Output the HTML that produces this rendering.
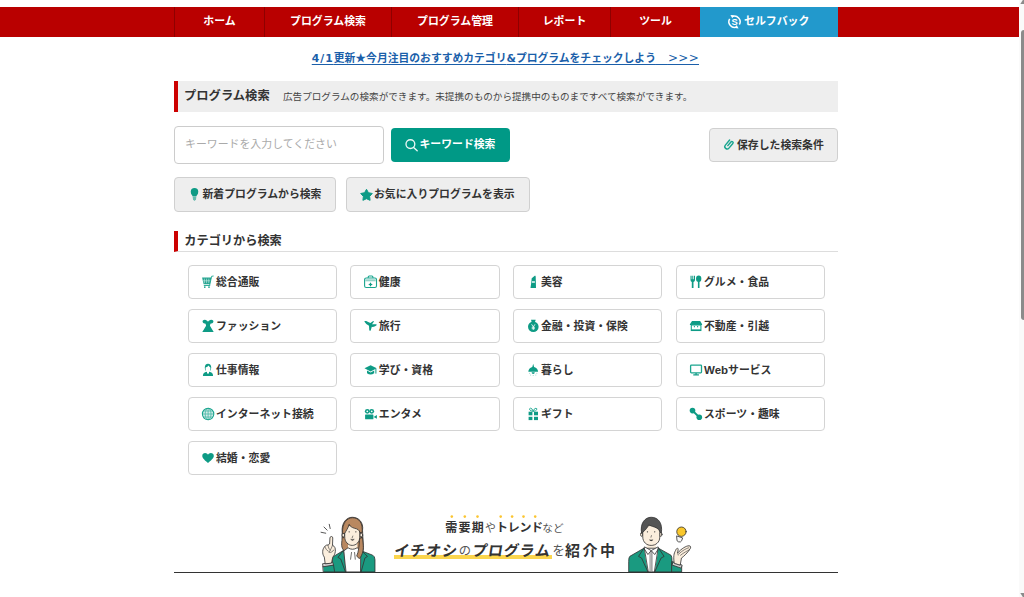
<!DOCTYPE html>
<html lang="ja">
<head>
<meta charset="utf-8">
<title>プログラム検索</title>
<style>
*{box-sizing:border-box;margin:0;padding:0}
html,body{width:1024px;height:597px;overflow:hidden;background:#fff}
body{font-family:"Liberation Sans","Noto Sans CJK JP",sans-serif;color:#333;position:relative}
.lat{font-family:"DejaVu Sans","Liberation Sans",sans-serif}
#nav{position:absolute;left:0;top:7px;width:1018.5px;height:30px;background:#b90000}
#nav div{position:absolute;top:0;height:30px;line-height:29px;text-align:center;color:#fff;font-weight:bold;font-size:10.9px;border-left:1px solid #8e0000;white-space:nowrap}
#nav div.sb{background:#2299cc;border-left:none;font-size:10.9px;text-align:left;padding-left:44px}
#notice{position:absolute;left:173.4px;width:664px;top:49px;height:18px;line-height:19px;text-align:center;font-size:10.8px;font-weight:bold;white-space:nowrap}
#notice a{color:#1b5faa;text-decoration:underline;text-underline-offset:2px}
#h1{position:absolute;left:174px;top:81px;width:664px;height:31px;background:#eee;border-left:4px solid #cc0000;white-space:nowrap}
#h1 b{position:absolute;left:6px;top:0;line-height:31px;font-size:12.3px;color:#333}
#h1 span{position:absolute;left:105px;top:0;line-height:32px;font-size:9.6px;color:#444}
.btn{position:absolute;border:1px solid #d0d0d0;background:#eee;border-radius:4px;font-weight:bold;font-size:10.85px;color:#333;white-space:nowrap}
.btn span{position:absolute;top:0}
#kw{position:absolute;left:174px;top:126px;width:210px;height:38px;border:1px solid #ccc;border-radius:4px;background:#fff;font-size:10.9px;color:#aaa;line-height:35px;padding-left:10px;white-space:nowrap}
#kwbtn{position:absolute;left:391px;top:128px;width:118.5px;height:34px;border-radius:4px;background:#009986;color:#fff;font-weight:bold;font-size:10.85px;line-height:33px;white-space:nowrap}
#kwbtn span{position:absolute;left:28.5px;top:0}
#h2{position:absolute;left:174px;top:231px;width:664px;height:21px;border-left:4px solid #cc0000;border-bottom:1px solid #ddd;line-height:20px;font-size:12.2px;font-weight:bold;padding-left:6.3px;color:#333;white-space:nowrap}
.cat{position:absolute;width:148.5px;height:33.5px;border:1px solid #d4d4d4;border-radius:4px;background:#fff;font-size:10.85px;font-weight:bold;line-height:32px;color:#333;white-space:nowrap}
.cat span{position:absolute;left:27px;top:0}
#banner div{position:absolute;white-space:nowrap;color:#333}
#banner .t1{top:517px;height:22px;line-height:22px;font-size:12px}
#banner .t2{top:538px;height:26px;line-height:26px;font-size:15px}
#banner .ul{left:393.5px;top:555px;width:158.5px;height:4.3px;background:#fbd54d}
#banner .bl{left:174px;top:572px;width:664px;height:1.3px;background:#333}
#icons{position:absolute;left:0;top:0;width:1024px;height:597px;pointer-events:none}
#sbar{position:absolute;left:1018.5px;top:0;width:5.5px;height:597px;background:#fafafa}
#sbar i{position:absolute;left:2px;top:30px;width:8px;height:290px;border-radius:3px;background:#8b8b8b}
</style>
</head>
<body>
<div id="nav">
<div style="left:174px;width:90px">ホーム</div><div style="left:264px;width:127px">プログラム検索</div><div style="left:391px;width:127px">プログラム管理</div><div style="left:518px;width:92px">レポート</div><div style="left:610px;width:90px">ツール</div><div class="sb" style="left:700px;width:138px">セルフバック</div>
</div>
<div id="notice"><a><span class="lat" style="letter-spacing:1px">4/1</span>更新★今月注目のおすすめカテゴリ<span class="lat">&amp;</span>プログラムをチェックしよう<span style="letter-spacing:1.2px">　</span><span class="lat" style="letter-spacing:.3px;font-weight:normal;font-size:12px;line-height:1">&gt;&gt;&gt;</span></a></div>
<div id="h1"><b>プログラム検索</b><span>広告プログラムの検索ができます。未提携のものから提携中のものまですべて検索ができます。</span></div>
<div id="kw">キーワードを入力してください</div>
<div id="kwbtn"><span>キーワード検索</span></div>
<div class="btn" style="left:709px;top:128px;width:129px;height:34px;line-height:32px"><span style="left:27px">保存した検索条件</span></div>
<div class="btn" style="left:174px;top:177px;width:162px;height:34.5px;line-height:32px"><span style="left:27.5px">新着プログラムから検索</span></div>
<div class="btn" style="left:346px;top:177px;width:184px;height:34.5px;line-height:32px"><span style="left:27px">お気に入りプログラムを表示</span></div>
<div id="h2">カテゴリから検索</div>
<div id="cats">
<div class="cat" style="left:188px;width:149px;top:265px"><span>総合通販</span></div>
<div class="cat" style="left:350px;width:150px;top:265px"><span style="left:27.8px">健康</span></div>
<div class="cat" style="left:513px;width:149px;top:265px"><span>美容</span></div>
<div class="cat" style="left:676px;width:148.5px;top:265px"><span>グルメ・食品</span></div>
<div class="cat" style="left:188px;width:149px;top:309px"><span>ファッション</span></div>
<div class="cat" style="left:350px;width:150px;top:309px"><span style="left:27.8px">旅行</span></div>
<div class="cat" style="left:513px;width:149px;top:309px"><span>金融・投資・保険</span></div>
<div class="cat" style="left:676px;width:148.5px;top:309px"><span>不動産・引越</span></div>
<div class="cat" style="left:188px;width:149px;top:353px"><span>仕事情報</span></div>
<div class="cat" style="left:350px;width:150px;top:353px"><span style="left:27.8px">学び・資格</span></div>
<div class="cat" style="left:513px;width:149px;top:353px"><span>暮らし</span></div>
<div class="cat" style="left:676px;width:148.5px;top:353px"><span><span style="position:static;font-size:11.5px">Web</span>サービス</span></div>
<div class="cat" style="left:188px;width:149px;top:397px"><span>インターネット接続</span></div>
<div class="cat" style="left:350px;width:150px;top:397px"><span style="left:27.8px">エンタメ</span></div>
<div class="cat" style="left:513px;width:149px;top:397px"><span>ギフト</span></div>
<div class="cat" style="left:676px;width:148.5px;top:397px"><span>スポーツ・趣味</span></div>
<div class="cat" style="left:188px;width:149px;top:441px"><span>結婚・恋愛</span></div>
</div>
<div id="banner">
<div class="ul"></div>
<div class="t1" style="left:445.2px;letter-spacing:1.3px;font-weight:bold">需要期</div>
<div class="t1" style="left:485px;font-size:10.8px;color:#555">や</div>
<div class="t1" style="left:496px;letter-spacing:-0.3px;font-weight:bold">トレンド</div>
<div class="t1" style="left:542.3px;font-size:10.6px;color:#555">など</div>
<div class="t2" style="left:392.6px;letter-spacing:.9px;font-weight:bold;transform:skewX(-9deg);transform-origin:0 80%">イチオシ</div>
<div class="t2" style="left:458.8px;font-size:12.3px;color:#555">の</div>
<div class="t2" style="left:470.6px;letter-spacing:.8px;font-weight:bold;transform:skewX(-9deg);transform-origin:0 80%">プログラム</div>
<div class="t2" style="left:552.5px;font-size:12.3px;color:#555">を</div>
<div class="t2" style="left:565px;letter-spacing:2.5px;font-weight:bold">紹介中</div>
<div class="bl"></div>
</div>
<svg id="people" style="position:absolute;left:0;top:0;width:1024px;height:597px" viewBox="0 0 1024 597">
<g fill="#fbc531"><circle cx="451.8" cy="516.6" r="1.3"/><circle cx="464.8" cy="516.6" r="1.3"/><circle cx="477.5" cy="516.6" r="1.3"/><circle cx="500.7" cy="516.6" r="1.3"/><circle cx="512.1" cy="516.6" r="1.3"/><circle cx="523.5" cy="516.6" r="1.3"/><circle cx="535.2" cy="516.6" r="1.3"/></g>
<!-- woman -->
<g transform="translate(314 510) scale(0.11725)" stroke="#333" stroke-width="7" stroke-linejoin="round" stroke-linecap="round">
<path d="M240 190C232 105 280 62 326 62C382 62 424 105 414 175L420 300C425 360 402 398 386 415L360 352L262 346C236 338 232 300 238 262Z" fill="#b98860"/>
<path d="M290 285V345H370V285Z" fill="#fbeedd" stroke="none"/>
<path d="M255 348L290 322Q328 348 368 322L402 348V528H268Z" fill="#fff"/>
<path d="M320 362L312 420M346 362L352 420" fill="none" stroke-width="6"/>
<path d="M250 346L160 400L148 528H270Z" fill="#1a9a80"/>
<path d="M402 348L500 385Q520 395 520 425V528H400Z" fill="#1a9a80"/>
<path d="M250 346L204 404L228 418L268 528" fill="none"/><path d="M408 350L456 396L434 410L402 528" fill="none"/>
<ellipse cx="251" cy="214" rx="12" ry="17" fill="#fbeedd"/><ellipse cx="403" cy="214" rx="12" ry="17" fill="#fbeedd"/>
<rect x="243" y="227" width="10" height="14" fill="#333" stroke="none"/><rect x="402" y="227" width="10" height="14" fill="#333" stroke="none"/>
<path d="M262 160C262 120 390 120 390 160V232C390 272 360 302 326 302C292 302 262 272 262 232Z" fill="#fbeedd"/>
<path d="M244 198C236 110 285 66 328 66C384 66 420 112 410 194L392 192C388 172 372 161 346 156C322 150 305 136 300 122C292 152 274 178 262 198Z" fill="#b98860"/>
<path d="M394 240L414 236L420 300C425 360 402 398 386 415L364 392C380 360 386 300 388 262Z" fill="#b98860"/>
<circle cx="300" cy="186" r="5.500" fill="#333" stroke="none"/><circle cx="357" cy="186" r="5.500" fill="#333" stroke="none"/>
<path d="M331 222L326 236" fill="none" stroke-width="5"/>
<path d="M314 252Q328 270 342 252Z" fill="#333" stroke-width="3"/>
<path d="M78 480L166 466L176 528H82Z" fill="#1a9a80"/>
<path d="M76 458L160 446L166 470L80 484Z" fill="#cfcfcf"/>
<path d="M95 456L88 402C66 372 72 330 92 312C98 300 112 296 120 300C124 292 130 290 133 290L136 238C137 222 160 222 160 238L158 300C176 308 186 330 182 352C180 375 170 390 160 402L150 450Z" fill="#fbeedd"/>
<path d="M92 312C100 330 108 345 120 350M120 300C122 320 128 335 138 342M158 300C150 322 140 345 126 360C142 366 160 356 170 340" fill="none" stroke-width="5"/>
<path d="M60 190L100 198M85 145L112 172M130 122L138 158" fill="none" stroke-width="7"/>
</g>
<!-- man -->
<g transform="translate(624 510) scale(0.11725)" stroke="#333" stroke-width="7" stroke-linejoin="round" stroke-linecap="round">
<path d="M192 280V340H272V280Z" fill="#fbeedd" stroke="none"/>
<path d="M172 326H292L300 528H168Z" fill="#fff"/>
<rect x="224" y="352" width="16" height="176" fill="#bdbdbd" stroke-width="3.500"/>
<path d="M178 316L232 346L204 380L172 330Z" fill="#fff"/><path d="M288 316L232 346L262 380L294 330Z" fill="#fff"/>
<ellipse cx="152" cy="208" rx="11" ry="17" fill="#fbeedd"/><ellipse cx="313" cy="208" rx="11" ry="17" fill="#fbeedd"/>
<path d="M160 170C160 118 305 118 305 170V232C305 276 270 302 232 302C195 302 160 276 160 232Z" fill="#fbeedd"/>
<path d="M150 198C134 112 180 62 232 62C292 62 332 112 318 198L305 182C296 158 268 146 244 140C228 136 216 130 212 120C204 148 184 170 160 190Z" fill="#555"/>
<circle cx="200" cy="186" r="5.500" fill="#333" stroke="none"/><circle cx="262" cy="186" r="5.500" fill="#333" stroke="none"/>
<path d="M234 218L230 232" fill="none" stroke-width="5"/>
<path d="M218 256Q232 272 246 256Z" fill="#333" stroke-width="3"/>
<path d="M170 326L50 395Q40 402 40 440V528H204Z" fill="#1a9a80"/>
<path d="M294 326L400 385Q410 392 410 440V528H262Z" fill="#1a9a80"/>
<path d="M166 330L124 396L150 410L204 528" fill="none"/><path d="M298 330L342 396L316 410L262 528" fill="none"/>
<path d="M410 440L492 478V528H410Z" fill="#1a9a80"/>
<path d="M422 444L496 470L488 496L412 470Z" fill="#cfcfcf"/>
<path d="M428 452C420 400 425 370 440 345C446 325 462 320 462 336L458 366C490 330 530 305 555 305C572 305 572 325 560 336C545 362 510 396 490 410L480 468Z" fill="#fbeedd"/>
<path d="M470 372C500 345 530 328 552 322M482 386C510 364 540 348 560 338M458 366L462 384" fill="none" stroke-width="5"/>
<path d="M452 222L500 238L492 262Q484 277 466 272Q447 266 450 250Z" fill="#f6f6f6"/>
<circle cx="490" cy="185" r="40" fill="#f9c72c"/>
</g>
</svg>

<div id="sbar"><i></i></div>
<svg id="icons" viewBox="0 0 1024 597">
<g fill="#0e9b85" stroke="none">
<!-- selfback -->
<g fill="none" stroke="#fff" stroke-width="1.5">
<path d="M732.13 16.62A5.600 5.600 0 0 1 739.35 24.500"/>
<path d="M736.87 26.78A5.600 5.600 0 0 1 729.65 18.900"/>
</g>
<path d="M730.4 14.900L734 15.300L732.300 18.300Z" fill="#fff"/><path d="M738.600 28.500L735 28.100L736.700 25.100Z" fill="#fff"/>
<!-- magnifier -->
<g fill="none" stroke="#e9f7f5" stroke-width="1.35" stroke-linecap="round"><circle cx="410.4" cy="144.1" r="4.4"/><path d="M413.6 147.4L417.2 150.7"/></g>
<!-- paperclip -->
<g transform="translate(729.1 144.700) rotate(40)" fill="none" stroke="#1aa58f" stroke-width="1.450" stroke-linecap="round"><path d="M-.4 1.500V-3.300a1.250 1.250 0 0 1 2.500 0V2.700a2.350 2.350 0 0 1-4.700 0V-3.900"/></g>
<!-- bulb -->
<circle cx="194.5" cy="191.7" r="3.75"/><path d="M191.3 193.5L192.7 196.6h3.6L197.7 193.5Z"/><path d="M192.7 197h3.6l-.3 2.4-1.5 1.7-1.5-1.7Z" opacity=".6"/>
<!-- star -->
<polygon points="366.50,189.30 368.44,192.73 372.30,193.51 369.64,196.42 370.09,200.34 366.50,198.70 362.91,200.34 363.36,196.42 360.70,193.51 364.56,192.73" stroke="#0e9b85" stroke-width="1" stroke-linejoin="round"/>
<!-- cart -->
<path d="M202.1 277.6h9.3l-1.500 6.600h-6.300Z" opacity=".9"/>
<g stroke="#fff" stroke-width=".6" opacity=".8"><path d="M204.4 278.6v4.6M206.6 278.6v4.6M208.8 278.6v4.6M203 280.8h7.6"/></g>
<path d="M213.6 276l-2 .3-1.9 8.7" fill="none" stroke="#1aa58f" stroke-width=".9"/>
<path d="M203.8 285.5h6.4" fill="none" stroke="#1aa58f" stroke-width=".9"/>
<circle cx="204.8" cy="287.1" r=".85"/><circle cx="209" cy="287.1" r=".85"/>
<!-- medkit -->
<g fill="none" stroke="#1aa58f" stroke-width="1.1"><rect x="364.6" y="278" width="11.9" height="9.5" rx="1.6"/><path d="M368.2 278v-1a1 1 0 0 1 1-1h2.700a1 1 0 0 1 1 1v1"/></g>
<rect x="365.400" y="279.300" width="10.300" height="2" opacity=".45"/>
<path d="M370.5 282.2l.8 1.5 1.5.8-1.5.8-.8 1.5-.8-1.5-1.5-.8 1.5-.8Z"/>
<!-- lipstick -->
<path d="M531.7 278.2L535.1 275.6l.6.8.3 11.6h-5.5l.7-5Z"/><rect x="531.9" y="281.3" width="3" height="1.4" fill="#fff"/>
<!-- fork spoon -->
<path d="M690.5 275.8h1.1v3.4h.7v-3.4h.9v3.4h.7v-3.4h1.1v4.2q0 1.6-1.5 2v6h-1.7v-6q-1.3-.4-1.3-2Z"/>
<ellipse cx="698.7" cy="278.8" rx="2.65" ry="3.2"/><rect x="697.9" y="281" width="1.6" height="7"/>
<!-- dress -->
<path d="M204.800 319.700C203 319.700 202.400 320.800 202.600 321.800C202.900 323.200 204.400 323.700 205.600 323.700L206.100 325.700L202.300 331.900H213.700L209.900 325.700L210.400 323.700C211.600 323.700 213.100 323.200 213.400 321.800C213.600 320.800 213 319.700 211.200 319.700C209.800 319.700 208.600 320.800 208 321.700C207.400 320.800 206.200 319.700 204.800 319.700Z"/>
<!-- plane -->
<path d="M364.6 321.1l1.5-.2 4.3 2 2.8-2 .8.6-2 2.7h4.6l-.2 1.3q-2.4 1.8-4.6 1.3l-1.2 4-1.3-.3-.3-4.7q-3-1.3-4.5-4Z"/>
<!-- money bag -->
<circle cx="533.3" cy="326.8" r="5.3"/><path d="M531 319.7h4.7l-.9 2.8h-3Z"/>
<g fill="none" stroke="#fff" stroke-width=".8"><path d="M531.6 324.3l1.7 2.6 1.7-2.6M533.3 326.9v3M531.7 327.3h3.2M531.7 328.7h3.2"/></g>
<!-- shop -->
<path d="M692 321h8.2l1.9 3.2v.9h-12.2v-.9Z"/><rect x="691.3" y="325" width="9.6" height="5.5" fill="#fff" stroke="#1aa58f" stroke-width="1.1"/><rect x="691.3" y="329.4" width="9.6" height="1.5"/>
<circle cx="694.4" cy="326.7" r=".65"/><circle cx="697.6" cy="326.7" r=".65"/>
<!-- person -->
<path d="M202.9 376q0-4.2 5.1-4.2 5.1 0 5.100 4.200Z"/>
<ellipse cx="208" cy="367.6" rx="3.2" ry="3.9"/><path d="M205.600 367.600q2-.4 3-2 .8 1.600 1.800 2v1.400q0 2.200-1.400 3v1.600h-2v-1.600q-1.400-.8-1.400-3Z" fill="#fff"/>
<!-- grad cap -->
<path d="M364.500 368.300l6.100-3.100 6.200 3.100-6.200 3.100Z"/><path d="M367 370.600v2.700q3.600 2.500 7.200 0v-2.700l-3.600 1.800Z"/><path d="M375.900 369v4.600" stroke="#0e9b85" stroke-width="1"/>
<!-- lamp -->
<path d="M533.200 363.800l.9 3.200q3.800 1.400 4 4.700h-9.800q.2-3.300 4-4.700Z"/><path d="M531.600 372.300a1.600 1.600 0 0 0 3.200 0Z"/>
<g opacity=".45"><circle cx="529.6" cy="373.300" r=".5"/><circle cx="530.600" cy="375.100" r=".5"/><circle cx="533.200" cy="375.600" r=".5"/><circle cx="535.800" cy="375.100" r=".5"/><circle cx="536.800" cy="373.300" r=".5"/></g>
<!-- monitor -->
<rect x="690.6" y="365.200" width="10.900" height="7.700" rx=".8" fill="none" stroke="#1aa58f" stroke-width="1.300"/><rect x="695.200" y="373.300" width="1.800" height="1.300"/><rect x="693.200" y="374.300" width="5.800" height="1.100" rx=".5"/>
<!-- globe -->
<circle cx="208.100" cy="414" r="5.700" fill="#0e9b85" fill-opacity=".18" stroke="#1aa58f" stroke-width="1.100"/>
<g fill="none" stroke="#1aa58f" stroke-width=".8" opacity=".75"><ellipse cx="208.100" cy="414" rx="2.900" ry="5.700"/><path d="M208.100 408.300v11.400M202.400 414h11.400M203.400 411h9.400M203.400 417h9.400"/></g>
<!-- camera -->
<circle cx="367.300" cy="411.300" r="2.400"/><circle cx="371.700" cy="411.300" r="2.400"/><circle cx="367.300" cy="411.300" r=".9" fill="#fff"/><circle cx="371.700" cy="411.300" r=".9" fill="#fff"/>
<rect x="365.100" y="414.500" width="8.300" height="4.800" rx=".6"/><path d="M373.600 416.900l3.300-1.900v3.700Z"/>
<!-- gift -->
<rect x="528.600" y="411.700" width="3.800" height="3.600"/><rect x="534" y="411.700" width="4" height="3.600"/><rect x="528.600" y="416.800" width="3.800" height="3.300"/><rect x="534" y="416.800" width="4" height="3.300"/>
<g fill="none" stroke="#1aa58f" stroke-width=".9"><path d="M533.200 411.400q-1-3.400-2.800-3.200-1.300.3-.7 1.600.8 1.200 3.500 1.600q1-3.400 2.800-3.200 1.300.3.700 1.600-.8 1.200-3.500 1.600"/></g>
<!-- dumbbell -->
<circle cx="692.500" cy="410.600" r="2.800"/><circle cx="699.300" cy="417.300" r="2.800"/><path d="M692.500 410.600l6.800 6.700" stroke="#0e9b85" stroke-width="2"/>
<!-- heart -->
<path d="M208 463C203 459 202.300 457.500 202.300 455.800C202.300 453.900 203.600 453 205.100 453C206.400 453 207.500 453.800 208 454.800C208.500 453.800 209.600 453 210.900 453C212.400 453 213.800 453.900 213.800 455.800C213.800 457.500 213 459 208 463Z"/>
</g>
<text x="734.6" y="25.1" font-family="Liberation Sans, sans-serif" font-weight="bold" font-size="9.3" fill="#fff" text-anchor="middle">S</text>
<!-- scrollbar arrows -->
<path d="M1020.3 4L1022.800 0h1.200v4Z" fill="#8b8b8b"/><path d="M1020.3 593L1022.800 597h1.200v-4Z" fill="#8b8b8b"/>
</svg>
</body>
</html>
